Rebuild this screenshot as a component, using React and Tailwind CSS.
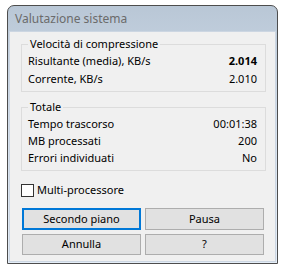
import React from "react";

const font = { fontFamily: '"Noto Sans", "Open Sans", sans-serif' };

function Row({label, value, bold, h = "h-[18px]"}) {
    return (
        <div className={`flex items-center justify-between ${h}`}>
            <span>{label}</span>
            <span className={bold ? "font-bold" : ""}>{value}</span>
        </div>
    );
}

function Group({title, className, children}) {
    return (
        <fieldset className={`border border-[#dcdcdc] pl-[6px] pr-[8px] ${className}`}>
            <legend className="ml-[0px] px-[2px] leading-[16px]">{title}</legend>
            {children}
        </fieldset>
    );
}

export default function App() {
    return (
        <div className="w-[285px] h-[277px] bg-white pt-[5px] pl-[7px] text-[11px] text-black" style={font}>
            <div className="w-[271px] h-[259px] border border-[#4d4d4d] rounded-t-[7px] bg-gradient-to-b from-[#b9c7d6] via-[#d6e1ee] to-[#e4edf7] flex flex-col px-[1px] pb-[1px]">
                {/* Title bar */}
                <div className="h-[25px] flex items-center pl-[6px] text-[12px] text-[#6b6b6b]">
                    Valutazione sistema
                </div>

                {/* Content */}
                <div className="flex-1 bg-[#f0f0f0] border border-[#ccd6e2] pl-[11px] pr-[9px] pt-[4px]">
                    <Group title="Velocità di compressione" className="pb-[3px]">
                        <Row label="Risultante (media), KB/s" value="2.014" bold/>
                        <Row label="Corrente, KB/s" value="2.010"/>
                    </Group>

                    <Group title="Totale" className="mt-[7px] pt-[1px] pb-[3px]">
                        <Row label="Tempo trascorso" value="00:01:38" h="h-[17px]"/>
                        <Row label="MB processati" value="200" h="h-[17px]"/>
                        <Row label="Errori individuati" value="No" h="h-[17px]"/>
                    </Group>

                    <label className="flex items-center gap-[3px] mt-[12px] h-[14px]">
                        <span className="w-[13px] h-[13px] border border-[#333] bg-white"/>
                        <span>Multi-processore</span>
                    </label>

                    <div className="grid grid-cols-2 gap-x-[4px] gap-y-[4px] mt-[11px] mr-[2px] ml-[1px]">
                        <button className="h-[22px] bg-[#e1e1e1] border-2 border-[#0078d7]">Secondo piano</button>
                        <button className="h-[22px] bg-[#e1e1e1] border border-[#adadad]">Pausa</button>
                        <button className="h-[21px] bg-[#e1e1e1] border border-[#adadad]">Annulla</button>
                        <button className="h-[21px] bg-[#e1e1e1] border border-[#adadad]">?</button>
                    </div>
                </div>
            </div>
        </div>
    );
}
